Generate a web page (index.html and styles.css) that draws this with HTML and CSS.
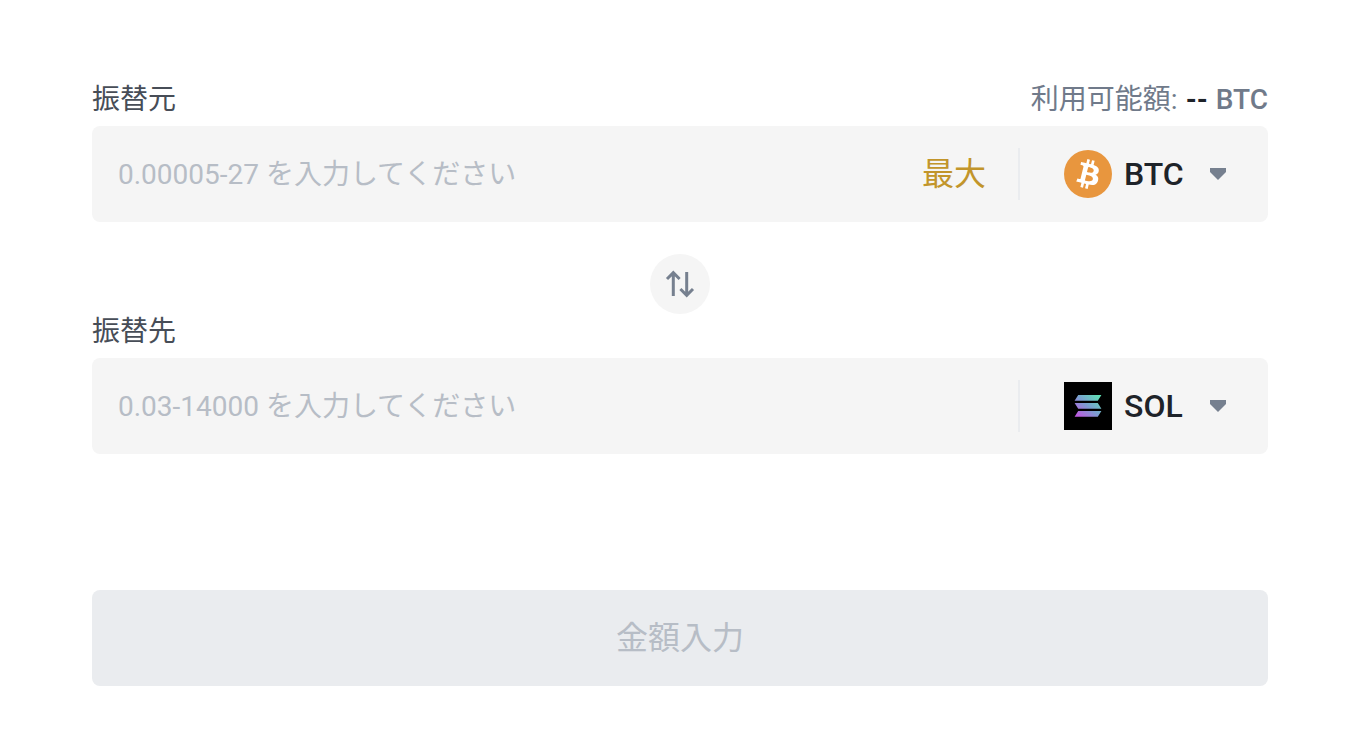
FILE: index.html
```html
<!DOCTYPE html>
<html lang="ja">
<head>
    <meta charset="UTF-8">
    <meta name="viewport" content="width=device-width, initial-scale=1.0">
    <title>コンバート</title>
    <link rel="stylesheet" href="styles.css">
</head>
<body>
    <form class="convert">
        <!-- From -->
        <div class="field-head">
            <label for="from-amount">振替元</label>
            <p class="available">利用可能額: <span class="balance">--</span> <span class="unit">BTC</span></p>
        </div>
        <div class="field">
            <input class="amount" id="from-amount" type="text" inputmode="decimal" placeholder="0.00005-27 を入力してください">
            <button class="max-btn" type="button">最大</button>
            <div class="coin">
                <svg class="coin-icon" viewBox="0 0 32 32" aria-hidden="true">
                    <circle cx="16" cy="16" r="16" fill="#e8963e"/>
                    <path fill="#fff" d="M23.189 14.02c.314-2.096-1.283-3.223-3.465-3.975l.708-2.84-1.728-.43-.69 2.765c-.454-.114-.92-.22-1.385-.326l.695-2.783L15.596 6l-.708 2.839c-.376-.086-.746-.17-1.104-.26l.002-.009-2.384-.595-.46 1.846s1.283.294 1.256.312c.7.175.826.638.805 1.006l-.806 3.235c.048.012.11.03.18.057l-.183-.045-1.13 4.532c-.086.212-.303.531-.793.41.018.025-1.256-.313-1.256-.313l-.858 1.978 2.25.561c.418.105.828.215 1.231.318l-.715 2.872 1.727.43.708-2.84c.472.127.93.245 1.378.357l-.706 2.828 1.728.43.715-2.866c2.948.558 5.164.333 6.097-2.333.752-2.146-.037-3.385-1.588-4.192 1.13-.26 1.98-1.003 2.207-2.538zm-3.95 5.538c-.533 2.147-4.148.986-5.32.695l.95-3.805c1.172.293 4.929.872 4.37 3.11zm.535-5.569c-.487 1.953-3.495.96-4.47.717l.86-3.45c.975.243 4.118.696 3.61 2.733z"/>
                </svg>
                <select class="coin-select" aria-label="振替元の通貨">
                    <option selected>BTC</option>
                    <option>SOL</option>
                </select>
                <svg class="caret" viewBox="0 0 16 12" aria-hidden="true"><path d="M0 0h16v4l-8 8-8-8z"/></svg>
            </div>
        </div>

        <button class="swap-btn" type="button" aria-label="入れ替え">
            <svg viewBox="0 0 60 60" aria-hidden="true">
                <path d="M23.3 42V18.5M17 25l6.3-6.3 6.3 6.3M36.7 18v23.5M30.4 35l6.3 6.3 6.3-6.3"/>
            </svg>
        </button>

        <!-- To -->
        <div class="field-head">
            <label for="to-amount">振替先</label>
        </div>
        <div class="field">
            <input class="amount" id="to-amount" type="text" inputmode="decimal" placeholder="0.03-14000 を入力してください">
            <div class="coin">
                <svg class="coin-icon" viewBox="0 0 48 48" aria-hidden="true">
                    <defs>
                        <linearGradient id="sol" gradientUnits="userSpaceOnUse" x1="35" y1="13" x2="15" y2="36">
                            <stop offset="0" stop-color="#5fe3b4"/>
                            <stop offset="0.5" stop-color="#7a9fd0"/>
                            <stop offset="1" stop-color="#c058e0"/>
                        </linearGradient>
                    </defs>
                    <path d="M0 0h48v48H0z"/>
                    <path fill="url(#sol)" d="M14.2 13h23.2l-3.6 5.7H10.6zM10.6 21h23.2l3.6 5.8H14.2zM14.2 29h23.2l-3.6 5.8H10.6z"/>
                </svg>
                <select class="coin-select" aria-label="振替先の通貨">
                    <option>BTC</option>
                    <option selected>SOL</option>
                </select>
                <svg class="caret" viewBox="0 0 16 12" aria-hidden="true"><path d="M0 0h16v4l-8 8-8-8z"/></svg>
            </div>
        </div>

        <button class="submit-btn" type="submit" disabled>金額入力</button>
    </form>
</body>
</html>
```
FILE: styles.css
```css
:root {
    --text: #1e2329;
    --label: #474d57;
    --muted: #707a8a;
    --icon: #76808f;
    --placeholder: #b7bdc6;
    --field: #f5f5f5;
    --line: #eaecef;
    --gold: #c2952b;
}

* {
    box-sizing: border-box;
    margin: 0;
    padding: 0;
}

body {
    background: #fff;
    color: var(--text);
    font-family: Roboto, "Noto Sans CJK JP", sans-serif;
    font-size: 28px;
    line-height: 36px;
}

button,
input,
select {
    font: inherit;
    border: none;
    background: none;
}

.convert {
    display: flex;
    flex-direction: column;
    padding: 82px 90px 44px 92px;
}

.field-head {
    display: flex;
    justify-content: space-between;
    margin-bottom: 8px;
    color: var(--label);
}

.available {
    display: flex;
    gap: 8px;
    color: var(--muted);
}

.balance {
    color: var(--text);
    font-weight: 700;
}

.unit {
    font-weight: 500;
}

.field {
    display: flex;
    align-items: center;
    height: 96px;
    border-radius: 8px;
    background: var(--field);
}

.amount {
    flex: 1;
    min-width: 0;
    height: 100%;
    padding-left: 26px;
    color: var(--text);
    outline: none;
}

.amount::placeholder {
    color: var(--placeholder);
}

.max-btn {
    margin-right: 32px;
    color: var(--gold);
    font-size: 32px;
    cursor: pointer;
}

.coin {
    position: relative;
    display: flex;
    align-items: center;
    width: 250px;
    height: 52px;
    padding-left: 44px;
    border-left: 2px solid var(--line);
}

.coin-icon {
    width: 48px;
    height: 48px;
}

.coin-select {
    flex: 1;
    height: 100%;
    padding-left: 12px;
    appearance: none;
    outline: none;
    color: var(--text);
    font-size: 32px;
    font-weight: 500;
    cursor: pointer;
}

/* sits over the select so the whole area stays clickable */
.caret {
    position: absolute;
    top: 20px;
    right: 42px;
    width: 16px;
    height: 12px;
    fill: var(--icon);
    pointer-events: none;
}

.swap-btn {
    align-self: center;
    width: 60px;
    height: 60px;
    margin-top: 32px;
    border-radius: 50%;
    background: var(--field);
    cursor: pointer;
}

.swap-btn svg {
    display: block;
    fill: none;
    stroke: var(--icon);
    stroke-width: 3;
}

.submit-btn {
    height: 96px;
    margin-top: 136px;
    border-radius: 8px;
    background: var(--line);
    color: var(--placeholder);
    font-size: 32px;
}
```
